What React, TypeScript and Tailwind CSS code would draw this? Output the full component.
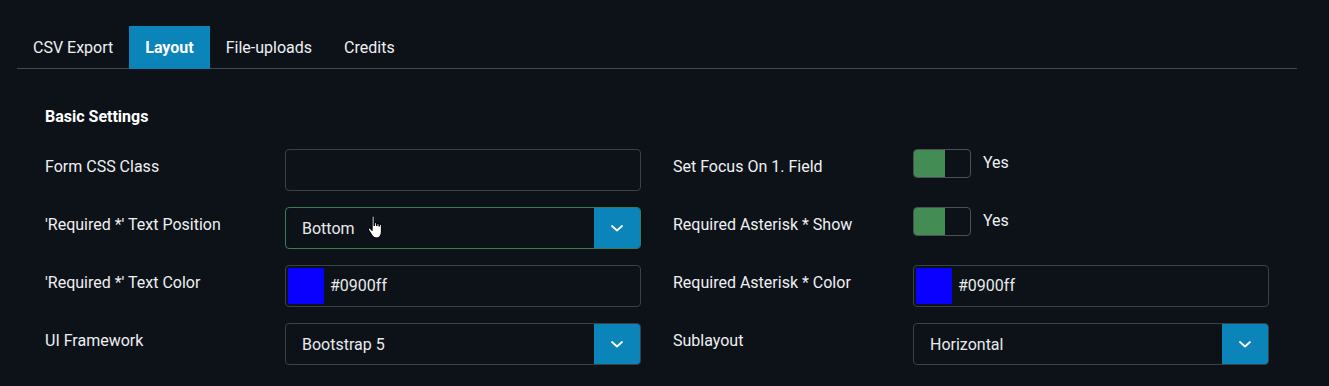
import React from 'react';

const Chevron = () => (
  <svg width="16" height="14" viewBox="0 0 16 14" fill="none">
    <path d="M3 5l5 4.5L13 5" stroke="#ffffff" strokeWidth="1.8" strokeLinecap="round" strokeLinejoin="round" />
  </svg>
);

const HandCursor = () => (
  <svg width="22" height="27" viewBox="0 0 18 22" className="absolute left-[366px] top-[214px]">
    <path
      d="M5 2.2c0-1 1.6-1 1.6 0v7.2h.4V7.6c0-1 1.6-1 1.6 0v1.8h.4V8.3c0-1 1.6-1 1.6 0v1.4h.4V9c0-1 1.6-1 1.6 0v5.6c0 2.6-1.6 5-4.6 5H8.4c-1.6 0-2.6-.8-3.4-2L2 12.8c-.6-1 .6-1.9 1.5-1.1L5 13.4z"
      fill="#ffffff"
      stroke="#000000"
      strokeWidth="0.9"
      strokeLinejoin="round"
    />
  </svg>
);

const TextInput = () => (
  <div className="h-[42px] w-[356px] rounded border border-[#3a4047] bg-[#0d1219]" />
);

const SelectBox = ({ value, focused }: { value: string; focused?: boolean }) => (
  <div
    className={`flex h-[42px] w-[356px] items-stretch overflow-hidden rounded border ${
      focused ? 'border-[#3d7a55]' : 'border-[#3a4047]'
    } bg-[#0d1219]`}
  >
    <div className="flex flex-1 items-center pl-4 pt-[2px] text-[16px] text-[#e8eaed]">{value}</div>
    <div className="flex w-[46px] items-center justify-center bg-[#0b84b9]">
      <Chevron />
    </div>
  </div>
);

const ColorInput = ({ value }: { value: string }) => (
  <div className="flex h-[42px] w-[356px] items-center rounded border border-[#3a4047] bg-[#0d1219] pl-[2px]">
    <div className="h-[36px] w-[36px] bg-[#0900ff]" />
    <span className="ml-[6px] text-[16px] text-[#e8eaed]">{value}</span>
  </div>
);

const Toggle = () => (
  <div className="flex h-[42px] items-start gap-[12px]">
    <div className="flex h-[29px] w-[58px] overflow-hidden rounded border border-[#4a5057] bg-[#0d1219]">
      <div className="h-full w-[31px] bg-[#438c54]" />
    </div>
    <span className="mt-[2px] text-[16px] text-[#eef0f2]">Yes</span>
  </div>
);

const Row = ({ label, children }: { label: string; children: React.ReactNode }) => (
  <div className="flex h-[58px] items-start">
    <div className="flex h-[36px] w-[240px] items-center text-[16px] text-[#eef0f2]">{label}</div>
    {children}
  </div>
);

export default function App() {
  const tabs = ['CSV Export', 'Layout', 'File-uploads', 'Credits'];
  return (
    <div
      className="relative h-[386px] w-[1329px] overflow-hidden bg-[#0d1219]"
      style={{ fontFamily: 'Roboto, "Noto Sans", sans-serif' }}
    >
      <div className="px-[17px] pt-[26px]">
        <div className="flex h-[43px] w-[1280px] border-b border-[#3a4a55]">
          {tabs.map((t) => (
            <div
              key={t}
              className={`flex h-[43px] items-center px-[16px] text-[16px] ${
                t === 'Layout' ? 'bg-[#0b84b9] font-bold text-white' : 'text-[#eef0f2]'
              }`}
            >
              {t}
            </div>
          ))}
        </div>
      </div>

      <div className="px-[45px] pt-[36px]">
        <div className="text-[16px] font-bold text-white">Basic Settings</div>
        <div className="mt-[20px] flex gap-[32px]">
          <div className="flex flex-col">
            <Row label="Form CSS Class">
              <TextInput />
            </Row>
            <Row label="'Required *' Text Position">
              <SelectBox value="Bottom" focused />
            </Row>
            <Row label="'Required *' Text Color">
              <ColorInput value="#0900ff" />
            </Row>
            <Row label="UI Framework">
              <SelectBox value="Bootstrap 5" />
            </Row>
          </div>
          <div className="flex flex-col">
            <Row label="Set Focus On 1. Field">
              <Toggle />
            </Row>
            <Row label="Required Asterisk * Show">
              <Toggle />
            </Row>
            <Row label="Required Asterisk * Color">
              <ColorInput value="#0900ff" />
            </Row>
            <Row label="Sublayout">
              <SelectBox value="Horizontal" />
            </Row>
          </div>
        </div>
      </div>
      <HandCursor />
    </div>
  );
}
